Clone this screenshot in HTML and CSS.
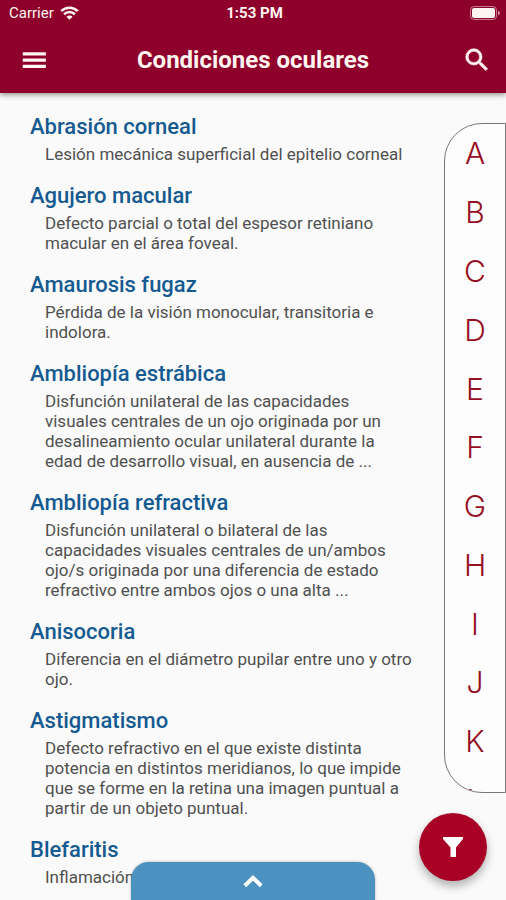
FILE: index.html
```html
<!DOCTYPE html>
<html lang="es">
<head>
  <meta charset="UTF-8" />
  <meta name="viewport" content="width=device-width, initial-scale=1" />
  <title>Condiciones oculares</title>
  <link rel="stylesheet" href="styles.css">
</head>
<body>
  <div class="app">
    <header class="header">
      <div class="status-bar">
        <div class="carrier">
          <span>Carrier</span>
          <svg class="wifi" viewBox="0 0 19 14" aria-hidden="true">
            <path d="M1.2 5.2a11.8 11.8 0 0 1 16.6 0M4.1 8.2a7.7 7.7 0 0 1 10.8 0" fill="none" stroke="currentColor" stroke-width="2.6" />
            <path d="M9.5 13.8L6.4 10.7a4.4 4.4 0 0 1 6.2 0z" fill="currentColor" />
          </svg>
        </div>
        <span class="time">1:53 PM</span>
        <svg class="battery" viewBox="0 0 30 14" aria-hidden="true">
          <rect x="0.5" y="0.5" width="26" height="13" rx="3.5" fill="none" stroke="currentColor" opacity="0.5" />
          <rect x="2" y="2" width="23" height="10" rx="2" fill="currentColor" />
          <path d="M28 4.8q2 0.8 2 2.2t-2 2.2z" fill="currentColor" opacity="0.6" />
        </svg>
      </div>
      <div class="toolbar">
        <button class="icon-button" type="button" aria-label="Menú">
          <svg viewBox="0 0 24 24"><path d="M3 18.300h18.500v-2.600H3zM3 13.300h18.500v-2.600H3zM3 5.700v2.600h18.500V5.700z" /></svg>
        </button>
        <h1>Condiciones oculares</h1>
        <button class="icon-button" type="button" aria-label="Buscar">
          <svg class="search" viewBox="0 0 24 24"><path d="M15.5 14h-.79l-.28-.27A6.471 6.471 0 0 0 16 9.5 6.5 6.5 0 1 0 9.5 16c1.61 0 3.09-.59 4.23-1.57l.27.28v.79l5 4.99L20.49 19l-4.99-5zm-6 0C7.01 14 5 11.99 5 9.5S7.01 5 9.5 5 14 7.01 14 9.5 11.99 14 9.5 14z" /></svg>
        </button>
      </div>
    </header>

    <main class="list">
      <article class="condition" id="A">
        <h2>Abrasión corneal</h2>
        <p>Lesión mecánica superficial del epitelio corneal</p>
      </article>
      <article class="condition">
        <h2>Agujero macular</h2>
        <p>Defecto parcial o total del espesor retiniano macular en el área foveal.</p>
      </article>
      <article class="condition">
        <h2>Amaurosis fugaz</h2>
        <p>Pérdida de la visión monocular, transitoria e indolora.</p>
      </article>
      <article class="condition">
        <h2>Ambliopía estrábica</h2>
        <p>Disfunción unilateral de las capacidades visuales centrales de un ojo originada por un desalineamiento ocular unilateral durante la edad de desarrollo visual, en ausencia de ...</p>
      </article>
      <article class="condition">
        <h2>Ambliopía refractiva</h2>
        <p>Disfunción unilateral o bilateral de las capacidades visuales centrales de un/ambos ojo/s originada por una diferencia de estado refractivo entre ambos ojos o una alta ...</p>
      </article>
      <article class="condition">
        <h2>Anisocoria</h2>
        <p>Diferencia en el diámetro pupilar entre uno y otro ojo.</p>
      </article>
      <article class="condition">
        <h2>Astigmatismo</h2>
        <p>Defecto refractivo en el que existe distinta potencia en distintos meridianos, lo que impide que se forme en la retina una imagen puntual a partir de un objeto puntual.</p>
      </article>
      <article class="condition" id="B">
        <h2>Blefaritis</h2>
        <p>Inflamación</p>
      </article>
    </main>

    <nav class="letters" aria-label="Índice alfabético">
      <a href="#A">A</a>
      <a href="#B">B</a>
      <a href="#C">C</a>
      <a href="#D">D</a>
      <a href="#E">E</a>
      <a href="#F">F</a>
      <a href="#G">G</a>
      <a href="#H">H</a>
      <a href="#I">I</a>
      <a href="#J">J</a>
      <a href="#K">K</a>
      <a href="#L">L</a>
    </nav>

    <button class="filter" type="button" aria-label="Filtrar">
      <svg viewBox="0 0 20 20"><path d="M0 0h20v2l-7 8.500V20H7.500v-9.500L0 2z" /></svg>
    </button>

    <button class="sheet" type="button" aria-label="Abrir panel">
      <svg viewBox="0 0 20 13"><path d="M1.800 10.800L10 2.800l8.200 8" /></svg>
    </button>
  </div>
</body>
</html>
```
FILE: styles.css
```css
* {
  box-sizing: border-box;
}
body {
  margin: 0;
  font-family: Roboto, sans-serif;
  background-color: #fafafa;
}
button {
  border: none;
  padding: 0;
  cursor: pointer;
}
h1, h2, p {
  margin: 0;
}
.app {
  position: relative;
  height: 100vh;
  display: flex;
  flex-direction: column;
  overflow: hidden;
}

.header {
  position: relative;
  flex: none;
  background-color: #8e002b;
  color: #fff5f0;
  box-shadow: 0 2px 5px rgba(0, 0, 0, 0.4);
}
.status-bar {
  display: grid;
  grid-template-columns: 1fr auto 1fr;
  align-items: center;
  height: 26px;
  padding: 0 6px 0 9px;
  font-size: 15px;
}
.carrier {
  display: flex;
  align-items: center;
  gap: 6px;
}
.wifi {
  width: 19px;
  height: 14px;
}
.time {
  font-weight: 700;
}
.battery {
  width: 30px;
  height: 14px;
  justify-self: end;
}
.toolbar {
  display: flex;
  align-items: center;
  justify-content: space-between;
  height: 67px;
  padding: 0 14px 0 19px;
}
.toolbar h1 {
  flex: 1;
  padding-right: 5px;
  text-align: center;
  font-size: 24px;
  line-height: 28px;
  font-weight: 700;
}
.icon-button {
  width: 30px;
  height: 30px;
  background: none;
  color: inherit;
}
.icon-button svg {
  display: block;
  width: 30px;
  height: 30px;
  fill: currentColor;
}
.icon-button .search {
  stroke: currentColor;
  stroke-width: 0.5;
}

.list {
  flex: 1;
  min-height: 0;
  overflow-y: auto;
  scrollbar-width: none;
  padding: 20px 84px 0 30px;
}
.condition {
  padding-bottom: 18px;
}
.condition h2 {
  font-size: 22px;
  line-height: 28px;
  font-weight: 500;
  color: #155a90;
}
.condition p {
  padding: 3px 8px 0 15px;
  font-size: 17px;
  line-height: 20px;
  font-weight: 400;
  color: #505050;
}

.letters {
  position: absolute;
  top: 123px;
  right: 0;
  bottom: 107px;
  width: 62px;
  display: flex;
  flex-direction: column;
  overflow: hidden;
  border: 1px solid #777;
  border-radius: 38px 0 0 38px;
  background-color: #fdfdfd;
}
.letters a {
  flex: 0 0 8.8%;
  display: flex;
  align-items: center;
  justify-content: center;
  font-family: Inter, sans-serif;
  font-size: 30px;
  font-weight: 300;
  color: #960f22;
  text-decoration: none;
}

.filter {
  position: absolute;
  right: 19px;
  bottom: 19px;
  width: 68px;
  height: 68px;
  display: flex;
  align-items: center;
  justify-content: center;
  border-radius: 50%;
  background-color: #a90025;
  box-shadow: 0 5px 10px rgba(0, 0, 0, 0.3);
}
.filter svg {
  width: 20px;
  height: 20px;
  fill: #fff;
}

.sheet {
  position: absolute;
  left: 0;
  right: 0;
  bottom: 0;
  width: 244px;
  height: 38px;
  margin: 0 auto;
  display: flex;
  align-items: center;
  justify-content: center;
  border-radius: 18px 18px 0 0;
  background-color: #4b92c1;
  box-shadow: 0 0 3px rgba(0, 0, 0, 0.3);
}
.sheet svg {
  width: 20px;
  height: 13px;
  fill: none;
  stroke: #fff;
  stroke-width: 4;
}
```
